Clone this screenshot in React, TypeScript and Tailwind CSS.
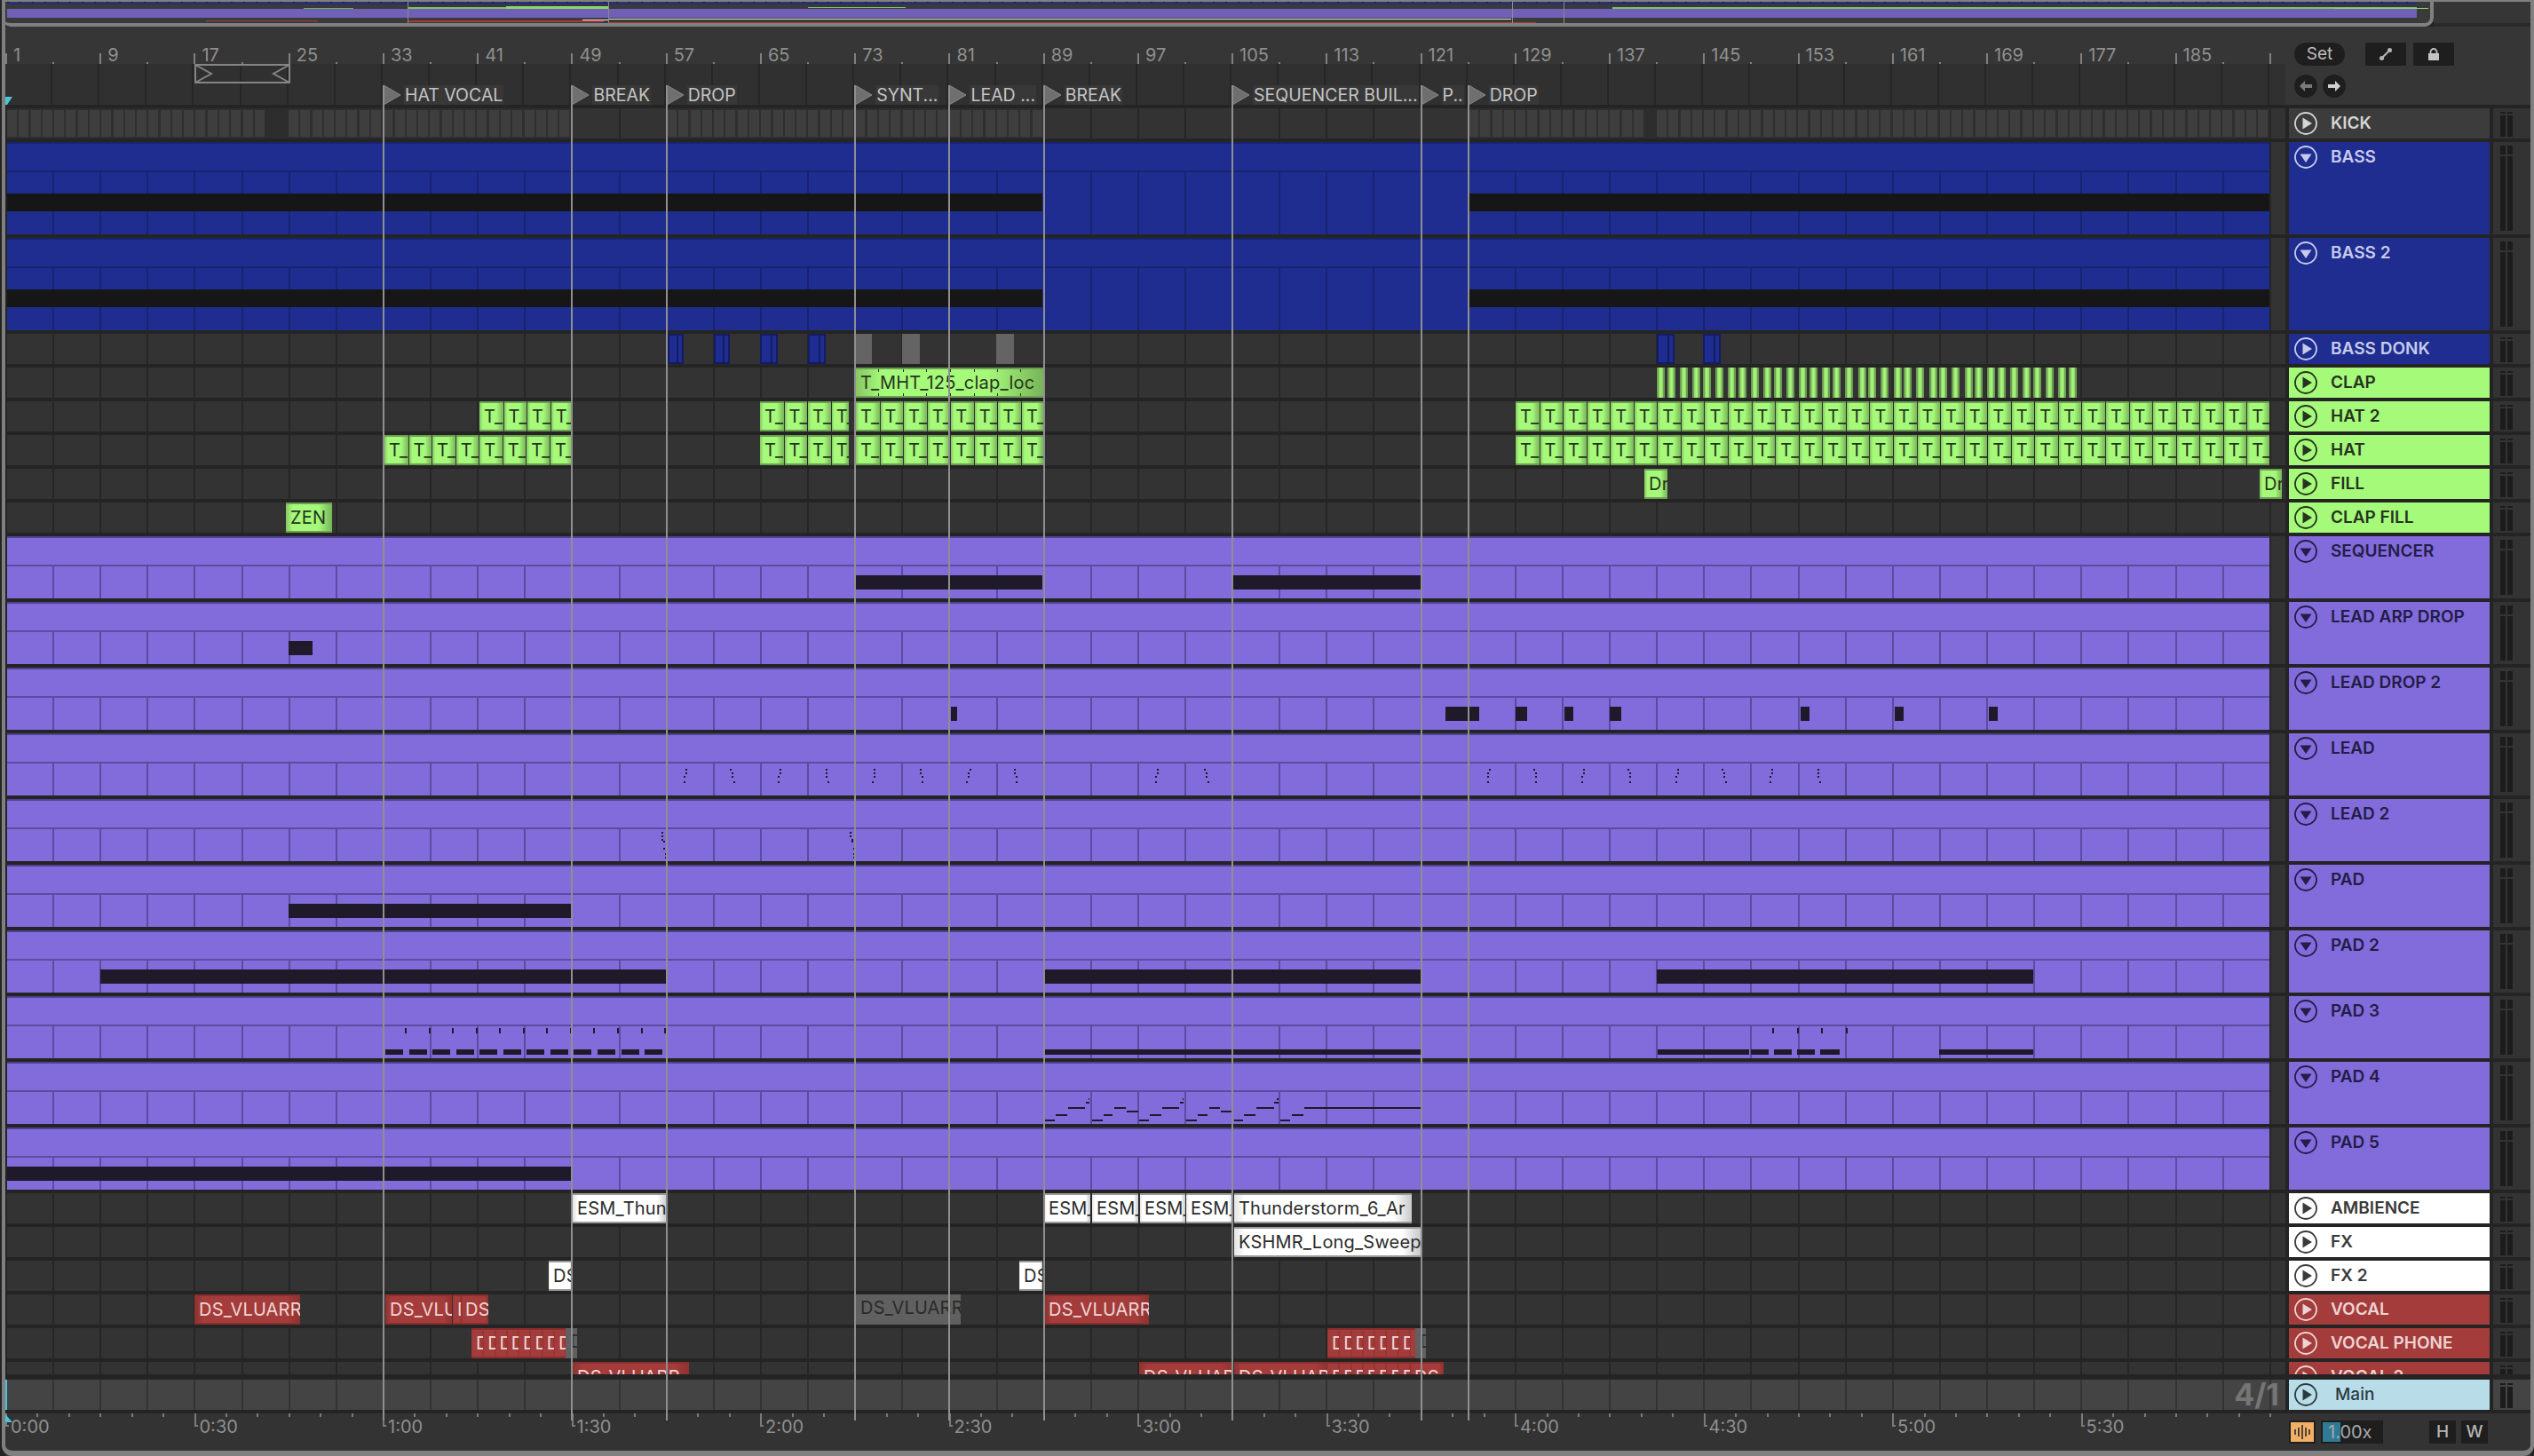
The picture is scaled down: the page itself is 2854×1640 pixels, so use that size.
import React from 'react';

const bar = (b: number) => 7 + (b - 1) * 13.28;
const CANVAS_X = 8;

const GRID_DARK = 'bg-[repeating-linear-gradient(90deg,transparent_0,transparent_51.12px,#262626_51.12px,#262626_53.12px)]';
const GRID_BLUE = 'bg-[repeating-linear-gradient(90deg,transparent_0,transparent_51.12px,#18246f_51.12px,#18246f_53.12px)]';
const GRID_PURPLE = 'bg-[repeating-linear-gradient(90deg,transparent_0,transparent_51.12px,#5a4c9e_51.12px,#5a4c9e_53.12px)]';
const GRID_MAIN = 'bg-[repeating-linear-gradient(90deg,transparent_0,transparent_51.12px,#333333_51.12px,#333333_53.12px)]';

type Tone = 'green' | 'blue' | 'gray' | 'white' | 'red' | 'redGray' | 'stripe';

const toneClass: Record<Tone, string> = {
  green: 'border-y-2 border-[#6d9e53] text-[#26331f] bg-[linear-gradient(90deg,#86c663_0,#a6fa7a_14%,#a6fa7a_70%,#78b558_100%)]',
  blue: 'border-2 border-[#141c63] bg-[#1e2d8f]',
  gray: 'bg-[#646464]',
  white: 'border-y-2 border-[#9a9a9a] text-[#2c2c2c] bg-[linear-gradient(90deg,#e4e4e4_0,#ffffff_6%,#ffffff_90%,#c9c9c9_100%)]',
  red: 'border-y-2 border-[#8a2f2d] text-[#f0d6d6] bg-[linear-gradient(90deg,#8e3230_0,#a33c3a_8%,#a33c3a_88%,#8e3230_100%)]',
  redGray: 'bg-[#606060] text-[#2a2a2a]',
  stripe: 'border-x-2 border-[#6d9e53] bg-[linear-gradient(90deg,#8fd06a,#a6fa7a,#8fd06a)]',
};

type ClipData = { x1: number; x2: number; tone: Tone; label?: string; ticks?: number[]; inner?: boolean };

const Clip: React.FC<ClipData> = ({ x1, x2, tone, label, ticks, inner }) => (
  <div
    className={`absolute top-0 h-[34px] overflow-hidden whitespace-nowrap pl-[5px] text-[20px] tracking-[0.2px] leading-[30px] z-10 ${toneClass[tone]}`}
    style={{ left: x1 - CANVAS_X, width: x2 - x1 }}
  >
    {label}
    {inner && <div className="absolute top-0 bottom-0 right-[4px] w-[2px] bg-[#141c63]" />}
    {ticks?.map((t) => (
      <React.Fragment key={t}>
        <div className="absolute top-0 w-[1px] h-[3px] bg-[#26331f]" style={{ left: t - x1 }} />
        <div className="absolute bottom-0 w-[1px] h-[3px] bg-[#26331f]" style={{ left: t - x1 }} />
      </React.Fragment>
    ))}
  </div>
);

// note: x1, x2 in page px, y and height relative to the row
type Note = [number, number, number, number];

const hatGroup = (x: number, n: number, end?: number): ClipData[] =>
  Array.from({ length: n }, (_, i) => ({
    x1: x + i * 26.56 + (i ? 1 : 0),
    x2: i === n - 1 && end ? end : x + (i + 1) * 26.56,
    tone: 'green' as Tone,
    label: 'T_',
  }));

const phoneGroup = (x: number, n: number): ClipData[] =>
  Array.from({ length: n }, (_, i) => ({
    x1: x + i * 13.28,
    x2: x + (i + 1) * 13.28,
    tone: 'red' as Tone,
    label: 'D',
  }));

const clapStripes = [130, 162, 202, 242, 274, 314, 354, 386, 426, 466, 498, 538, 578, 610, 650, 683, 723, 763, 795, 835, 875, 907, 947, 987, 1019, 1059, 1099, 1131, 1171, 1203, 1243, 1283, 1315, 1355, 1395, 1427];

const dots = (rows: number[], pts: number[][]): Note[] =>
  pts.flatMap((g) => g.map((x, i): Note => [x, x + 2, rows[i], 2]));

const leadNotes = dots([40, 44, 48, 54], [
  [772, 772, 770, 770], [822, 824, 824, 826], [878, 878, 876, 876], [930, 930, 930, 932],
  [984, 984, 984, 982], [1036, 1036, 1038, 1038], [1092, 1090, 1090, 1088], [1142, 1142, 1144, 1144],
  [1303, 1303, 1301, 1301], [1356, 1358, 1358, 1360],
  [1677, 1675, 1675, 1675], [1727, 1729, 1729, 1729], [1783, 1783, 1781, 1781], [1833, 1835, 1835, 1835],
  [1889, 1889, 1887, 1887], [1939, 1941, 1941, 1943], [1995, 1995, 1993, 1993], [2047, 2047, 2047, 2049],
]);

const lead2Notes = dots([37, 41, 45, 47, 55, 61, 65], [
  [745, 745, 745, 747, 747, 749, 749],
  [957, 957, 959, 959, 961, 961, 961],
]);

const pad3Notes: Note[] = [
  ...Array.from({ length: 12 }, (_, i): Note => [434 + i * 26.56, 454 + i * 26.56, 60, 6]),
  ...Array.from({ length: 12 }, (_, i): Note => [456 + i * 26.56, 458 + i * 26.56, 36, 6]),
  [1175, 1600, 60, 6],
  [1867, 1970, 60, 6], [1972, 1992, 60, 6], [1998, 2018, 60, 6], [2024, 2044, 60, 6], [2050, 2072, 60, 6],
  [1996, 1998, 36, 6], [2024, 2026, 36, 6], [2051, 2053, 36, 6], [2079, 2081, 36, 6],
  [2184, 2290, 60, 6],
];

// staircase read off the reference
const stairs: [number, number, number][] = [
  [192, 222, 1261], [226, 258, 1255], [260, 308, 1247], [310, 322, 1241], [318, 322, 1237],
  [328, 358, 1261], [362, 388, 1255], [392, 426, 1247], [428, 460, 1251],
  [464, 490, 1261], [494, 526, 1255], [528, 576, 1247], [578, 590, 1241], [586, 590, 1237],
  [596, 626, 1261], [630, 658, 1255], [662, 694, 1247], [696, 728, 1251],
  [734, 758, 1261], [762, 794, 1255], [796, 846, 1247], [848, 860, 1241], [856, 860, 1237],
  [864, 894, 1261], [898, 930, 1255], [934, 1265, 1247],
];
const pad4Notes: Note[] = stairs.map(([a, b, y]) => [a / 2.529 + 1100, b / 2.529 + 1100, y - 1196, 2]);

const KICK_SEGMENTS = [[8, 298], [325, 645], [751, 1175], [1654, 1851], [1866, 2556]];

type Track = {
  name: string;
  rowH: string;
  kind: 'small' | 'blue' | 'purple' | 'main';
  head: string;
  open?: boolean;
  clips?: ClipData[];
  notes?: Note[];
  kick?: boolean;
};

const HEAD_KICK = 'bg-[#3c3c3c] text-[#d4d4d4]';
const HEAD_BLUE = 'bg-[#1e2d8f] text-[#c6cbec]';
const HEAD_GREEN = 'bg-[#a6fa7a] text-[#26331f]';
const HEAD_PURPLE = 'bg-[#826cdb] text-[#231d47]';
const HEAD_WHITE = 'bg-white text-[#3a3a3a]';
const HEAD_RED = 'bg-[#a33c3a] text-[#edd3d3]';
const HEAD_MAIN = 'bg-[#b8dde9] text-[#2d3b41]';

const tracks: Track[] = [
  { name: 'KICK', rowH: 'h-[34px]', kind: 'small', head: HEAD_KICK, kick: true },
  { name: 'BASS', rowH: 'h-[104px]', kind: 'blue', head: HEAD_BLUE, open: true, notes: [[8, 1174, 58, 20], [1654, 2556, 58, 20]] },
  { name: 'BASS 2', rowH: 'h-[104px]', kind: 'blue', head: HEAD_BLUE, open: true, notes: [[8, 1174, 58, 20], [1654, 2556, 58, 20]] },
  {
    name: 'BASS DONK', rowH: 'h-[34px]', kind: 'small', head: HEAD_BLUE,
    clips: [
      { x1: 752, x2: 770, tone: 'blue', inner: true }, { x1: 804, x2: 822, tone: 'blue', inner: true },
      { x1: 856, x2: 876, tone: 'blue', inner: true }, { x1: 910, x2: 930, tone: 'blue', inner: true },
      { x1: 964, x2: 982, tone: 'gray' }, { x1: 1016, x2: 1036, tone: 'gray' }, { x1: 1122, x2: 1142, tone: 'gray' },
      { x1: 1866, x2: 1886, tone: 'blue', inner: true }, { x1: 1918, x2: 1938, tone: 'blue', inner: true },
    ],
  },
  {
    name: 'CLAP', rowH: 'h-[34px]', kind: 'small', head: HEAD_GREEN,
    clips: [
      { x1: 964, x2: 1175, tone: 'green', label: 'T_MHT_125_clap_loc', ticks: [989, 1017, 1043, 1070, 1097, 1123, 1149] },
      ...clapStripes.map((s, i): ClipData => ({ x1: s / 2.8 + 1820, x2: s / 2.8 + 1820 + (i % 3 === 1 ? 8.5 : 6), tone: 'stripe' })),
    ],
  },
  {
    name: 'HAT 2', rowH: 'h-[34px]', kind: 'small', head: HEAD_GREEN,
    clips: [...hatGroup(540, 4, 645), ...hatGroup(856, 4, 956), ...hatGroup(964, 8, 1175), ...hatGroup(1707, 32, 2556)],
  },
  {
    name: 'HAT', rowH: 'h-[34px]', kind: 'small', head: HEAD_GREEN,
    clips: [...hatGroup(433, 8, 645), ...hatGroup(856, 4, 956), ...hatGroup(964, 8, 1175), ...hatGroup(1707, 32, 2556)],
  },
  {
    name: 'FILL', rowH: 'h-[34px]', kind: 'small', head: HEAD_GREEN,
    clips: [{ x1: 1852, x2: 1878, tone: 'green', label: 'Dr' }, { x1: 2545, x2: 2570, tone: 'green', label: 'Dr' }],
  },
  { name: 'CLAP FILL', rowH: 'h-[34px]', kind: 'small', head: HEAD_GREEN, clips: [{ x1: 322, x2: 374, tone: 'green', label: 'ZEN' }] },
  { name: 'SEQUENCER', rowH: 'h-[70px]', kind: 'purple', head: HEAD_PURPLE, open: true, notes: [[964, 1174, 44, 16], [1389, 1600, 44, 16]] },
  { name: 'LEAD ARP DROP', rowH: 'h-[70px]', kind: 'purple', head: HEAD_PURPLE, open: true, notes: [[325, 352, 44, 16]] },
  {
    name: 'LEAD DROP 2', rowH: 'h-[70px]', kind: 'purple', head: HEAD_PURPLE, open: true,
    notes: [[1071, 1078, 44, 16], [1628, 1666, 44, 16], [1707, 1720, 44, 16], [1762, 1772, 44, 16], [1813, 1826, 44, 16], [2028, 2038, 44, 16], [2134, 2144, 44, 16], [2240, 2250, 44, 16]],
  },
  { name: 'LEAD', rowH: 'h-[70px]', kind: 'purple', head: HEAD_PURPLE, open: true, notes: leadNotes },
  { name: 'LEAD 2', rowH: 'h-[70px]', kind: 'purple', head: HEAD_PURPLE, open: true, notes: lead2Notes },
  { name: 'PAD', rowH: 'h-[70px]', kind: 'purple', head: HEAD_PURPLE, open: true, notes: [[325, 645, 44, 16]] },
  { name: 'PAD 2', rowH: 'h-[70px]', kind: 'purple', head: HEAD_PURPLE, open: true, notes: [[113, 751, 44, 16], [1176, 1600, 44, 16], [1866, 2290, 44, 16]] },
  { name: 'PAD 3', rowH: 'h-[70px]', kind: 'purple', head: HEAD_PURPLE, open: true, notes: pad3Notes },
  { name: 'PAD 4', rowH: 'h-[70px]', kind: 'purple', head: HEAD_PURPLE, open: true, notes: pad4Notes },
  { name: 'PAD 5', rowH: 'h-[70px]', kind: 'purple', head: HEAD_PURPLE, open: true, notes: [[8, 645, 44, 16]] },
  {
    name: 'AMBIENCE', rowH: 'h-[34px]', kind: 'small', head: HEAD_WHITE,
    clips: [
      { x1: 645, x2: 751, tone: 'white', label: 'ESM_Thun' },
      { x1: 1176, x2: 1228, tone: 'white', label: 'ESM_' }, { x1: 1230, x2: 1282, tone: 'white', label: 'ESM_' },
      { x1: 1284, x2: 1335, tone: 'white', label: 'ESM_' }, { x1: 1336, x2: 1389, tone: 'white', label: 'ESM_' },
      { x1: 1390, x2: 1590, tone: 'white', label: 'Thunderstorm_6_Ar' },
    ],
  },
  { name: 'FX', rowH: 'h-[34px]', kind: 'small', head: HEAD_WHITE, clips: [{ x1: 1390, x2: 1600, tone: 'white', label: 'KSHMR_Long_Sweep_' }] },
  {
    name: 'FX 2', rowH: 'h-[34px]', kind: 'small', head: HEAD_WHITE,
    clips: [{ x1: 618, x2: 644, tone: 'white', label: 'DS' }, { x1: 1148, x2: 1174, tone: 'white', label: 'DS' }],
  },
  {
    name: 'VOCAL', rowH: 'h-[34px]', kind: 'small', head: HEAD_RED,
    clips: [
      { x1: 219, x2: 338, tone: 'red', label: 'DS_VLUARR' }, { x1: 434, x2: 509, tone: 'red', label: 'DS_VLU' },
      { x1: 510, x2: 519, tone: 'red', label: 'D' }, { x1: 519, x2: 550, tone: 'red', label: 'DS_' },
      { x1: 964, x2: 1082, tone: 'redGray', label: 'DS_VLUARR' }, { x1: 1176, x2: 1294, tone: 'red', label: 'DS_VLUARR' },
    ],
  },
  {
    name: 'VOCAL PHONE', rowH: 'h-[34px]', kind: 'small', head: HEAD_RED,
    clips: [
      ...phoneGroup(531, 8), { x1: 637, x2: 650, tone: 'redGray', label: 'D' },
      ...phoneGroup(1495, 8), { x1: 1594, x2: 1606, tone: 'redGray', label: 'D' },
    ],
  },
  {
    name: 'VOCAL 2', rowH: 'h-[14px]', kind: 'small', head: HEAD_RED,
    clips: [
      { x1: 645, x2: 776, tone: 'red', label: 'DS_VLUARR' }, { x1: 1283, x2: 1389, tone: 'red', label: 'DS_VLUAR' },
      { x1: 1390, x2: 1495, tone: 'red', label: 'DS_VLUAR' }, ...phoneGroup(1495, 7), { x1: 1588, x2: 1626, tone: 'red', label: 'DS' },
    ],
  },
];

const TrackToggle = ({ open }: { open?: boolean }) => (
  <svg width="26" height="26" viewBox="0 0 26 26" className="shrink-0">
    <circle cx="13" cy="13" r="12" fill="none" stroke="currentColor" strokeWidth="1.8" />
    {open ? <polygon points="6.5,9.5 19.5,9.5 13,19" fill="currentColor" /> : <polygon points="9.5,6.5 9.5,19.5 20,13" fill="currentColor" />}
  </svg>
);

const Meter = ({ tall, bg }: { tall?: boolean; bg: string }) => (
  <div className={`w-[42px] h-full overflow-hidden flex gap-[2px] pl-[8px] ${bg}`}>
    {[0, 1].map((i) => (
      <div key={i} className="w-[6px] flex flex-col pt-[4px] gap-[2px]">
        <div className={`bg-[#1c1c1c] shrink-0 ${tall ? 'h-[10px]' : 'h-[2px]'}`} />
        <div className="bg-[#1c1c1c] flex-1 mb-[4px] min-h-[24px]" />
      </div>
    ))}
  </div>
);

const NoteBars = ({ notes, color }: { notes: Note[]; color: string }) => (
  <>
    {notes.map(([a, b, y, h], i) => (
      <div key={i} className={`absolute z-[5] ${color}`} style={{ left: a - CANVAS_X, width: b - a, top: y, height: h }} />
    ))}
  </>
);

const TrackRow = ({ t }: { t: Track }) => {
  const isBlue = t.kind === 'blue';
  return (
    <div className={`flex pl-[2px] mb-[4px] shrink-0 ${t.rowH}`}>
      <div className={`relative w-[2566px] h-full overflow-hidden bg-[#333333] ${GRID_DARK}`}>
        {(t.kind === 'blue' || t.kind === 'purple') && (
          <div className={`absolute left-0 top-0 bottom-0 w-[2548px] flex flex-col ${isBlue ? 'bg-[#1e2d8f]' : 'bg-[#826cdb]'}`}>
            <div className={`h-[2px] shrink-0 ${isBlue ? 'bg-[#18246f]' : 'bg-[#4f4390]'}`} />
            <div className="h-[30px] shrink-0" />
            <div className={`h-[2px] shrink-0 ${isBlue ? 'bg-[#18246f]' : 'bg-[#5a4c9e]'}`} />
            <div className={`flex-1 ${isBlue ? GRID_BLUE : GRID_PURPLE}`} />
          </div>
        )}
        {t.kick && (
          <>
            <div className="absolute left-[290px] w-[27px] top-0 bottom-0 bg-[#2d2d2d]" />
            <div className="absolute left-[1843px] w-[15px] top-0 bottom-0 bg-[#2d2d2d]" />
            {KICK_SEGMENTS.map(([a, b]) => (
              <div
                key={a}
                className="absolute top-0 bottom-0 py-[2px] bg-[#2f2f2f]"
                style={{ left: a - CANVAS_X, width: b - a }}
              >
                <div className="h-full bg-[repeating-linear-gradient(90deg,#3e3e3e_0,#3e3e3e_11px,#2f2f2f_11px,#2f2f2f_13.28px)]" />
              </div>
            ))}
          </>
        )}
        {t.notes && <NoteBars notes={t.notes} color={isBlue ? 'bg-[#161616]' : 'bg-[#1f1a29]'} />}
        {t.clips?.map((c, i) => <Clip key={i} {...c} />)}
      </div>
      <div className="w-[4px]" />
      <div className={`w-[226px] h-full overflow-hidden ${t.head}`}>
        <div className="flex items-center h-[34px] pl-[6px] gap-[15px]">
          <TrackToggle open={t.open} />
          <span className="text-[19px] font-semibold whitespace-nowrap">{t.name}</span>
        </div>
      </div>
      <div className="w-[4px]" />
      <Meter tall={t.rowH !== 'h-[34px]' && t.rowH !== 'h-[14px]'} bg="bg-[#333333]" />
    </div>
  );
};

const MainRow = () => (
  <div className="flex pl-[2px] mt-[2px] mb-[4px] h-[34px] shrink-0">
    <div className={`relative w-[2566px] h-full bg-[#444444] ${GRID_MAIN}`}>
      <div className="absolute left-[-2px] top-0 bottom-0 w-[2px] bg-[#4cc4d8]" />
      <span className="absolute right-[7px] top-0 leading-[34px] text-[34px] font-bold text-[#757575]">4/1</span>
    </div>
    <div className="w-[4px]" />
    <div className={`w-[226px] h-full ${HEAD_MAIN}`}>
      <div className="flex items-center h-[34px] pl-[6px] gap-[20px]">
        <TrackToggle />
        <span className="text-[19px] font-medium">Main</span>
      </div>
    </div>
    <div className="w-[4px]" />
    <Meter bg="bg-[#444444]" />
  </div>
);

const Overview = () => {
  const lines: [number, number, number, number, string][] = [
    [8, 2722, 3, 2, 'bg-[#1e2d8f]'],
    [8, 2722, 10, 10, 'bg-[#7060b8]'],
    [342, 398, 9, 1, 'bg-[#6fb056]'],
    [459, 570, 8, 2, 'bg-[#7cc462]'],
    [570, 685, 7, 3, 'bg-[#8ad66c]'],
    [232, 358, 23, 1, 'bg-[#a33c3a]'],
    [460, 680, 23, 2, 'bg-[#a33c3a]'],
    [656, 685, 22, 1, 'bg-[#e8e8e8]'],
    [685, 1702, 21, 1, 'bg-[#e8e8e8]'],
    [685, 1730, 25, 1, 'bg-[#a33c3a]'],
    [910, 1020, 8, 1, 'bg-[#7cc462]'],
    [1816, 2722, 8, 2, 'bg-[#7cc462]'],
    [2630, 2735, 9, 1, 'bg-[#8ad66c]'],
  ];
  return (
    <div className="flex h-[30px] shrink-0">
      <div className="relative w-[2739px] h-full bg-[#3a3a3a] border-b-4 border-r-4 border-[#808080] rounded-br-[10px] rounded-bl-[10px] overflow-hidden">
        <div className="absolute left-[6px] top-[2px] w-[2714px] h-[1px] bg-[repeating-linear-gradient(90deg,#1a1a1a_0,#1a1a1a_2px,transparent_2px,transparent_14px)]" />
        {lines.map(([a, b, y, h, c]) => (
          <div key={`${a}-${y}`} className={`absolute ${c}`} style={{ left: a - 2, width: b - a, top: y, height: h }} />
        ))}
        {[459, 685, 1703, 1761].map((x) => (
          <div key={x} className="absolute top-0 bottom-0 w-[1px] bg-[#8a8a8a]" style={{ left: x - 2 }} />
        ))}
      </div>
      <div className="flex-1 border-b-4 border-[#2a2a2a] bg-[#363636]" />
    </div>
  );
};

const barLabels = Array.from({ length: 24 }, (_, i) => 1 + i * 8);

const Ruler = () => (
  <div className="relative h-[42px] w-[2568px]">
    {barLabels.map((b) => (
      <div key={b} className="absolute top-0 h-full" style={{ left: bar(b) - 7 }}>
        <div className="absolute left-0 bottom-0 w-[2px] h-[12px] bg-[#808080]" />
        <span className="absolute left-[9px] top-[20px] text-[20px] leading-[24px] text-[#8f8f8f]">{b}</span>
      </div>
    ))}
    {barLabels.map((b) => (
      <div key={b} className="absolute bottom-0 w-[2px] h-[2px] bg-[#808080]" style={{ left: bar(b + 4) - 7 }} />
    ))}
    <div className="absolute bottom-0 w-[2px] h-[12px] bg-[#808080]" style={{ left: bar(193) - 7 }} />
  </div>
);

const locators: [number, string, number][] = [
  [33, 'HAT VOCAL', 212], [49, 'BREAK', 106], [57, 'DROP', 80], [73, 'SYNT...', 106], [81, 'LEAD ...', 106],
  [89, 'BREAK', 90], [105, 'SEQUENCER BUIL...', 212], [121, 'P..', 53], [125, 'DROP', 80],
];

const LocatorRow = () => (
  <div className={`relative h-[46px] w-[2568px] bg-[#303030] ${GRID_DARK}`}>
    <div className="absolute left-[213px] top-0 w-[108px] h-[22px]">
      <svg width="108" height="22" viewBox="0 0 108 22" fill="none" stroke="#858585" strokeWidth="2">
        <rect x="1" y="1" width="106" height="20" />
        <path d="M1 1 L19 11 L1 21 M107 1 L89 11 L107 21" />
      </svg>
    </div>
    <svg width="8" height="9" className="absolute left-0 bottom-0" viewBox="0 0 8 9">
      <polygon points="0,0 8,0 2,9 0,9" fill="#4cc4d8" />
    </svg>
    {locators.map(([b, label, w]) => (
      <div key={b} className="absolute top-[24px] h-[22px] flex overflow-hidden" style={{ left: bar(b) - 6, maxWidth: w }}>
        <svg width="20" height="22" viewBox="0 0 20 22" className="shrink-0">
          <polygon points="0,0 19,11 0,22" fill="#6f6f6f" stroke="#8a8a8a" strokeWidth="1" />
        </svg>
        <span className="ml-[3px] px-[1px] text-[19.5px] leading-[22px] whitespace-nowrap text-[#c4c4c4] bg-[#383838]">{label}</span>
      </div>
    ))}
  </div>
);

const SetControls = () => (
  <div className="flex-1 pl-[10px] pt-[18px]">
    <div className="flex items-center">
      <div className="w-[57px] h-[26px] rounded-full bg-[#1e1e1e] text-[#bdbdbd] text-[19px] leading-[26px] text-center">Set</div>
      <div className="ml-[23px] w-[46px] h-[26px] bg-[#1e1e1e] flex items-center justify-center">
        <svg width="16" height="16" viewBox="0 0 16 16">
          <line x1="4" y1="12" x2="12" y2="4" stroke="#b5b5b5" strokeWidth="2" />
          <circle cx="3.5" cy="12.5" r="2.5" fill="#b5b5b5" />
          <circle cx="12.5" cy="3.5" r="2.5" fill="#b5b5b5" />
        </svg>
      </div>
      <div className="ml-[8px] w-[46px] h-[26px] bg-[#1e1e1e] flex items-center justify-center">
        <svg width="16" height="16" viewBox="0 0 16 16">
          <path d="M4.5 8 V5.5 a3.5 3.5 0 0 1 7 0 V8" fill="none" stroke="#c4c4c4" strokeWidth="1.8" />
          <rect x="2" y="7" width="12" height="8" fill="#c4c4c4" />
        </svg>
      </div>
    </div>
    <div className="flex gap-[6px] mt-[10px]">
      <div className="w-[26px] h-[26px] rounded-full bg-[#1e1e1e] flex items-center justify-center">
        <svg width="14" height="12" viewBox="0 0 14 12"><polygon points="0,6 6,0 6,4 14,4 14,8 6,8 6,12" fill="#7a7a7a" /></svg>
      </div>
      <div className="w-[26px] h-[26px] rounded-full bg-[#1e1e1e] flex items-center justify-center">
        <svg width="14" height="12" viewBox="0 0 14 12"><polygon points="14,6 8,0 8,4 0,4 0,8 8,8 8,12" fill="#d0d0d0" /></svg>
      </div>
    </div>
  </div>
);

const timeLabels = ['0:00', '0:30', '1:00', '1:30', '2:00', '2:30', '3:00', '3:30', '4:00', '4:30', '5:00', '5:30'];

const TimeRuler = () => (
  <div className="relative h-[42px] w-[2568px]">
    {Array.from({ length: 73 }, (_, i) => i).map((i) => (
      <div key={i} className="absolute top-0 w-[2px] h-[4px] bg-[#7a7a7a]" style={{ left: i * 35.42 }} />
    ))}
    {timeLabels.map((l, i) => (
      <div key={l} className="absolute top-0 h-full" style={{ left: i * 212.5 }}>
        <div className="absolute left-0 top-0 w-[2px] h-[15px] bg-[#7a7a7a]" />
        <div className="absolute left-0 top-[13px] w-[4px] h-[2px] bg-[#7a7a7a]" />
        <span className="absolute left-[6px] top-[3px] text-[20px] leading-[24px] text-[#8f8f8f]">{l}</span>
      </div>
    ))}
    <svg width="8" height="9" className="absolute left-0 top-[1px]" viewBox="0 0 8 9">
      <polygon points="0,0 8,9 0,9" fill="#4cc4d8" />
    </svg>
  </div>
);

const BottomControls = () => (
  <div className="flex-1 flex items-start pl-[4px] pt-[8px]">
    <div className="w-[30px] h-[26px] bg-[#f2b066] border-2 border-[#1e1e1e] flex items-center justify-center">
      <svg width="20" height="16" viewBox="0 0 20 16" stroke="#2a2a2a" strokeWidth="1.6">
        <line x1="2" y1="5" x2="2" y2="11" /><line x1="6" y1="3" x2="6" y2="13" /><line x1="10" y1="0" x2="10" y2="16" />
        <line x1="14" y1="3" x2="14" y2="13" /><line x1="18" y1="5" x2="18" y2="11" />
      </svg>
    </div>
    <div className="relative ml-[6px] w-[70px] h-[26px] bg-[#1e1e1e] border-2 border-[#1e1e1e] text-[20px] leading-[22px] text-[#a9a9a9] overflow-hidden">
      <div className="absolute left-0 top-0 bottom-0 w-[20px] bg-[#2f7a94]" />
      <span className="relative ml-[6px]">1.00x</span>
    </div>
    <div className="ml-[52px] w-[30px] h-[26px] bg-[#1e1e1e] text-[#b5b5b5] text-[19px] leading-[26px] text-center font-medium">H</div>
    <div className="ml-[6px] w-[30px] h-[26px] bg-[#1e1e1e] text-[#b5b5b5] text-[19px] leading-[26px] text-center font-medium">W</div>
  </div>
);

const locatorLines = [33, 49, 57, 73, 81, 89, 105, 121, 125];

export default function App() {
  return (
    <div className="relative w-[2854px] h-[1640px] overflow-hidden bg-[#242424] font-['Inter',sans-serif]">
      <div className="flex flex-col h-full pl-[6px] pr-[4px] bg-[#242424]">
        <div className="-ml-[4px]"><Overview /></div>
        <div className="flex h-[88px] shrink-0 bg-[#363636]">
          <div className="flex flex-col">
            <Ruler />
            <LocatorRow />
          </div>
          <SetControls />
        </div>
        <div className="h-[4px] shrink-0" />
        <div className="flex flex-col">
          {tracks.map((t) => <TrackRow key={t.name} t={t} />)}
        </div>
        <MainRow />
        <div className="flex flex-1 bg-[#333333]">
          <TimeRuler />
          <BottomControls />
        </div>
      </div>

      {/* locator lines run over the clips */}
      {locatorLines.map((b) => (
        <div key={b} className="absolute top-[96px] h-[1504px] w-[2px] bg-[#8f8f8f] z-20" style={{ left: bar(b) - 1 }} />
      ))}

      {/* window frame */}
      <div className="absolute left-[2px] right-0 top-0 bottom-0 border-l-4 border-r-4 border-b-[6px] border-t-2 border-[#808080] rounded-b-[12px] pointer-events-none z-30" />
    </div>
  );
}
